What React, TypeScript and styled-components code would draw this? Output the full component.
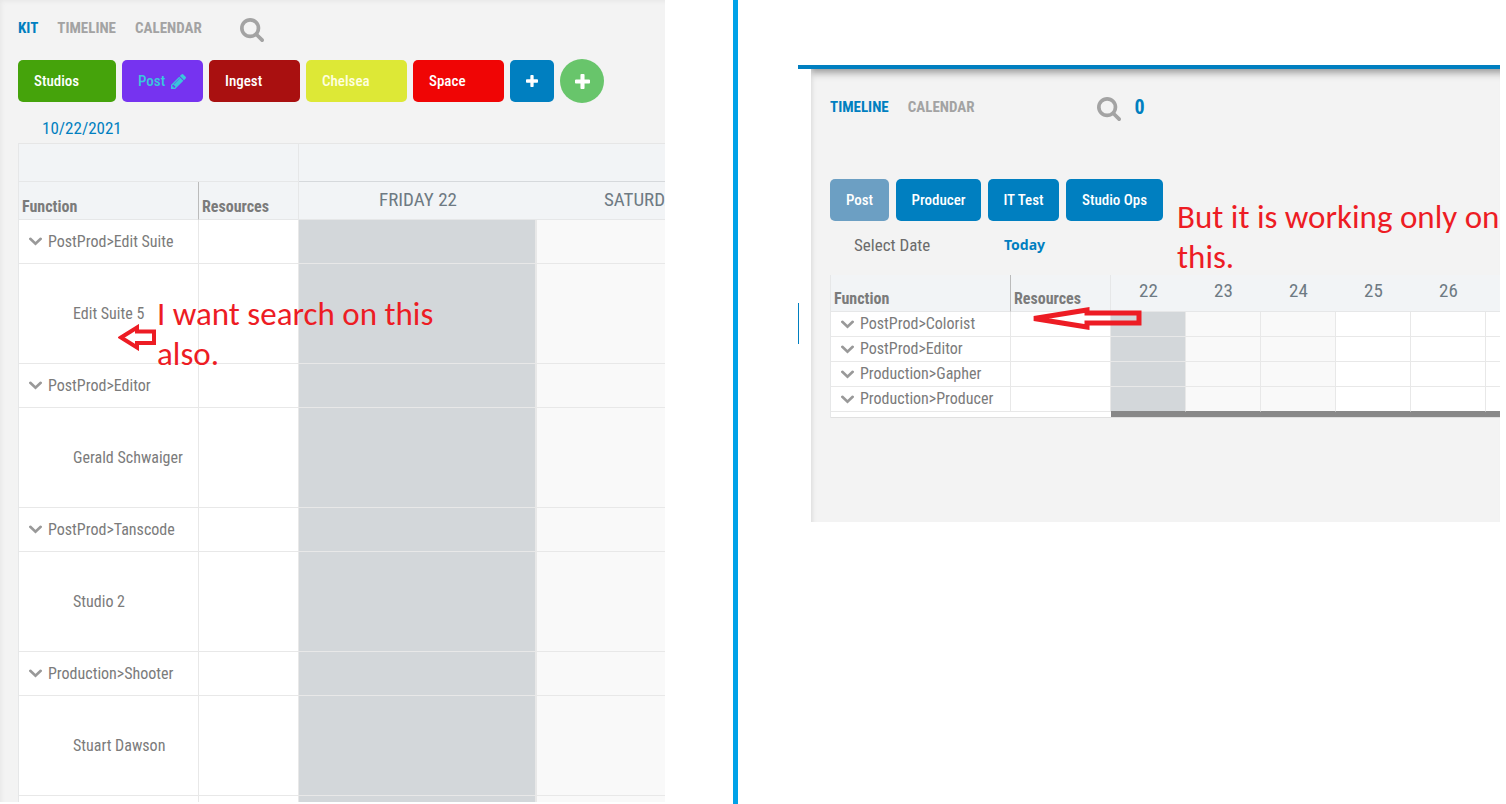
import React from 'react';
import styled, { createGlobalStyle } from 'styled-components';

const condensed = '"Roboto Condensed", "Liberation Sans Narrow", "Roboto", sans-serif';
const hand = 'Carlito, Lato, sans-serif';

const GlobalStyle = createGlobalStyle`
  *, *::before, *::after { box-sizing: border-box; }
  body { margin: 0; background: #fff; font-family: ${condensed}; color: #7b7b7b; }
  button { font-family: inherit; border: 0; padding: 0; cursor: pointer; }
`;

const Page = styled.main`
  display: grid;
  grid-template-columns: 665fr 68px 5px 60px 702fr;
  min-height: 100vh;
  padding-right: 6px;
  overflow: hidden;
`;

const KitPanel = styled.section`
  position: relative;
  min-width: 0;
  overflow: hidden;
  margin-bottom: 2px;
  padding: 16px 0 0 18px;
  background: #f3f3f3;
  box-shadow: inset 6px 6px 5px -5px #e6e6e6;
`;

const Divider = styled.div`
  grid-column: 3;
  background: #00a2e8;
`;

const RightSide = styled.div`
  grid-column: 5;
  min-width: 0;
  padding-top: 65px;
`;

const TopBar = styled.div`
  height: 4px;
  background: #007fc0;
`;

const RightBody = styled.div`
  display: flex;
  align-items: flex-start;
`;

const Marker = styled.div`
  flex: none;
  width: 13px;
  height: 41px;
  margin-top: 234px;
  border-left: 1px solid #007fc0;
`;

const TimelinePanel = styled.section`
  position: relative;
  flex: 1;
  min-width: 0;
  overflow: hidden;
  padding: 26px 0 104px 19px;
  background: #f3f3f3;
  box-shadow: inset 6px 0 5px -5px #d8d8d8, inset 0 12px 8px -9px #8c8c8c;
`;

const Nav = styled.nav<{ $gapBelow: number }>`
  display: flex;
  align-items: center;
  height: 24px;
  margin-bottom: ${(p) => p.$gapBelow}px;
`;

const NavLink = styled.a<{ $active?: boolean }>`
  margin-right: 19px;
  font-size: 15px;
  line-height: 20px;
  font-weight: 700;
  text-decoration: none;
  color: ${(p) => (p.$active ? '#007fc0' : '#a3a3a3')};
`;

const SearchButton = styled.button<{ $before: number }>`
  display: flex;
  margin-left: ${(p) => p.$before}px;
  margin-top: 4px;
  background: none;
  color: #a3a3a3;
`;

const Count = styled.span`
  margin-left: 14px;
  font-size: 20px;
  line-height: 24px;
  font-weight: 700;
  color: #007fc0;
`;

const ButtonRow = styled.div<{ $gap: number }>`
  display: flex;
  align-items: center;
  gap: ${(p) => p.$gap}px;
  height: 44px;
`;

const TagButton = styled.button<{ $bg: string; $fg?: string; $width: number; $center?: boolean }>`
  display: flex;
  align-items: center;
  justify-content: ${(p) => (p.$center ? 'center' : 'flex-start')};
  gap: 6px;
  width: ${(p) => p.$width}px;
  height: 42px;
  padding-left: ${(p) => (p.$center ? 0 : 16)}px;
  border-radius: 5px;
  background: ${(p) => p.$bg};
  color: ${(p) => p.$fg ?? '#fff'};
  font-size: 15px;
  font-weight: 500;
  white-space: nowrap;
`;

const RoundButton = styled.button`
  display: flex;
  align-items: center;
  justify-content: center;
  width: 44px;
  height: 44px;
  border-radius: 50%;
  background: #68c56b;
  color: #fff;
`;

const DateRow = styled.div<{ $above: number; $below: number }>`
  display: flex;
  align-items: center;
  padding: ${(p) => p.$above}px 0 ${(p) => p.$below}px 24px;
`;

const DateButton = styled.button<{ $blue?: boolean }>`
  width: 150px;
  background: none;
  font-size: 17px;
  line-height: 20px;
  text-align: left;
  color: ${(p) => (p.$blue ? '#007fc0' : '#6b6b6b')};
`;

const TodayButton = styled.button`
  background: none;
  font-family: "Noto Sans", sans-serif;
  font-size: 14px;
  line-height: 20px;
  font-weight: 700;
  color: #007fc0;
`;

const Table = styled.table<{ $width: number }>`
  table-layout: fixed;
  width: ${(p) => p.$width}px;
  border-collapse: separate;
  border-spacing: 0;
  border-left: 1px solid #e6e7e8;

  th, td { padding: 0; font-weight: 400; text-align: left; }
`;

const TopCell = styled.th<{ $line: string }>`
  height: 39px;
  background: #f2f4f6;
  border-top: 1px solid #e6e6e6;
  border-right: 1px solid #e6e7e8;
  border-bottom: 1px solid ${(p) => p.$line};
`;

const HeadCell = styled.th<{ $divider?: string; $height: number }>`
  && { padding: 12px 0 0 3px; font-weight: 700; }
  height: ${(p) => p.$height}px;
  background: #f2f4f6;
  border-right: 1px solid ${(p) => p.$divider ?? '#e6e7e8'};
  border-bottom: 1px solid #e6e7e8;
  font-size: 16px;
  line-height: 20px;
`;

const DayHead = styled.th<{ $below: number }>`
  && { padding-bottom: ${(p) => p.$below}px; text-align: center; }
  background: #f2f4f6;
  border-bottom: 1px solid #e6e7e8;
  font-size: 19px;
  line-height: 24px;
  color: #6e7a83;
`;

const Cell = styled.td<{ $height: number; $bg?: string; $rule?: number; $foot?: string }>`
  height: ${(p) => p.$height}px;
  background: ${(p) => p.$bg ?? '#fff'};
  border-right: ${(p) => p.$rule ?? 1}px solid #e8e8e8;
  border-bottom: 1px solid ${(p) => p.$foot ?? '#e8e8e8'};

  tr[data-cut] & { border-bottom: 0; }
`;

const Label = styled.span<{ $indent?: boolean }>`
  display: flex;
  align-items: center;
  gap: 6px;
  padding-left: ${(p) => (p.$indent ? 54 : 10)}px;
  font-size: 16px;
  line-height: 20px;
  white-space: nowrap;
`;

const Toggle = styled.button`
  display: flex;
  background: none;
  color: #999;
`;

const FootCell = styled.td<{ $bg: string }>`
  height: 6px;
  background: ${(p) => p.$bg};
  border-bottom: 1px solid #e0e0e0;
`;

const Note = styled.p<{ $left: number; $top: number; $width: number }>`
  position: absolute;
  left: ${(p) => p.$left}px;
  top: ${(p) => p.$top}px;
  width: ${(p) => p.$width}px;
  margin: 0;
  font-family: ${hand};
  font-size: 33px;
  line-height: 40px;
  color: #ed1c24;
`;

const Arrow = styled.svg<{ $left: number; $top: number }>`
  position: absolute;
  left: ${(p) => p.$left}px;
  top: ${(p) => p.$top}px;
`;

const SearchIcon = () => (
  <svg width="24" height="24" viewBox="0 128 1664 1664" fill="currentColor" aria-hidden="true">
    <path d="M1152 832q0-185-131.500-316.500t-316.500-131.500-316.500 131.500-131.500 316.500 131.500 316.500 316.500 131.500 316.500-131.500 131.500-316.500zm512 832q0 52-38 90t-90 38q-54 0-90-38l-343-342q-179 124-399 124-143 0-273.500-55.500t-225-150-150-225-55.500-273.500 55.500-273.500 150-225 225-150 273.500-55.500 273.500 55.500 225 150 150 225 55.500 273.500q0 220-124 399l343 343q37 37 37 90z" />
  </svg>
);

const PlusIcon = ({ size }: { size: number }) => (
  <svg width={size} height={size} viewBox="192 128 1408 1408" fill="currentColor" aria-hidden="true">
    <path d="M1600 736v192q0 40-28 68t-68 28h-416v416q0 40-28 68t-68 28h-192q-40 0-68-28t-28-68v-416h-416q-40 0-68-28t-28-68v-192q0-40 28-68t68-28h416v-416q0-40 28-68t68-28h192q40 0 68 28t28 68v416h416q40 0 68 28t28 68z" />
  </svg>
);

const PencilIcon = () => (
  <svg width="15" height="15" viewBox="128 149 1515 1515" fill="currentColor" aria-hidden="true">
    <path d="M491 1536l91-91-235-235-91 91v107h128v128h107zm523-928q0-22-22-22-10 0-17 7l-542 542q-7 7-7 17 0 22 22 22 10 0 17-7l542-542q7-7 7-17zm-54-192l416 416-832 832h-416v-416zm683 96q0 53-37 90l-166 166-416-416 166-165q36-38 90-38 53 0 91 38l235 234q37 39 37 91z" />
  </svg>
);

const Chevron = () => (
  <svg width="13" height="9" viewBox="0 0 13 9" fill="none" stroke="currentColor" strokeWidth="2.600" aria-hidden="true">
    <path d="M1.300 1.800L6.500 6.800L11.700 1.800" strokeLinecap="round" />
  </svg>
);

const kitRows = [
  { group: 'PostProd>Edit Suite', member: 'Edit Suite 5' },
  { group: 'PostProd>Editor', member: 'Gerald Schwaiger' },
  { group: 'PostProd>Tanscode', member: 'Studio 2' },
  { group: 'Production>Shooter', member: 'Stuart Dawson' },
];

const teamRows = ['PostProd>Colorist', 'PostProd>Editor', 'Production>Gapher', 'Production>Producer'];

const days = [
  { label: '22', bg: '#d3d7da' },
  { label: '23', bg: '#f9f9f9' },
  { label: '24', bg: '#f9f9f9' },
  { label: '25', bg: '#fff' },
  { label: '26', bg: '#fff' },
  { label: '', bg: '#fff' },
];

const GroupLabel = ({ text }: { text: string }) => (
  <Label>
    <Toggle aria-label={`Collapse ${text}`}>
      <Chevron />
    </Toggle>
    {text}
  </Label>
);

const KitRow = ({ height, cut, children }: { height: number; cut?: boolean; children?: React.ReactNode }) => (
  <tr data-cut={cut}>
    <Cell $height={height}>{children}</Cell>
    <Cell $height={height} />
    <Cell $height={height} $bg="#d3d7da" $rule={2} />
    <Cell $height={height} $bg="#f9f9f9" />
  </tr>
);

export default function App() {
  return (
    <>
      <GlobalStyle />
      <Page>
        <KitPanel>
          <Nav $gapBelow={19}>
            <NavLink href="#kit" $active>KIT</NavLink>
            <NavLink href="#timeline">TIMELINE</NavLink>
            <NavLink href="#calendar">CALENDAR</NavLink>
            <SearchButton $before={19} aria-label="Search"><SearchIcon /></SearchButton>
          </Nav>
          <ButtonRow $gap={6}>
            <TagButton $bg="#45a30b" $width={98}>Studios</TagButton>
            <TagButton $bg="#7633f0" $fg="#3ac6dc" $width={81}>Post <PencilIcon /></TagButton>
            <TagButton $bg="#a91010" $width={91}>Ingest</TagButton>
            <TagButton $bg="#dde836" $fg="#ffffe0" $width={101}>Chelsea</TagButton>
            <TagButton $bg="#f00505" $width={91}>Space</TagButton>
            <TagButton $bg="#007fc0" $width={44} $center aria-label="Add tag"><PlusIcon size={12} /></TagButton>
            <RoundButton aria-label="Add"><PlusIcon size={15} /></RoundButton>
          </ButtonRow>
          <DateRow $above={15} $below={5}>
            <DateButton $blue>10/22/2021</DateButton>
          </DateRow>
          <Table $width={757}>
            <colgroup>
              <col style={{ width: 180 }} />
              <col style={{ width: 100 }} />
              <col style={{ width: 238 }} />
              <col style={{ width: 238 }} />
            </colgroup>
            <thead>
              <tr>
                <TopCell colSpan={2} $line="#e6e7e8" />
                <TopCell colSpan={2} $line="#d6d9dc" />
              </tr>
              <tr>
                <HeadCell $divider="#bbb" $height={38}>Function</HeadCell>
                <HeadCell $height={38}>Resources</HeadCell>
                <DayHead $below={2}>FRIDAY 22</DayHead>
                <DayHead $below={2}>SATURDAY 23</DayHead>
              </tr>
            </thead>
            <tbody>
              {kitRows.map((row) => (
                <React.Fragment key={row.group}>
                  <KitRow height={44}><GroupLabel text={row.group} /></KitRow>
                  <KitRow height={100}><Label $indent>{row.member}</Label></KitRow>
                </React.Fragment>
              ))}
              <KitRow height={6} cut />
            </tbody>
          </Table>
          <Arrow $left={118} $top={324} width="39" height="27" viewBox="0 0 39 27" aria-hidden="true">
            <path d="M3 13.500L19 3.500V7.500H36V19H19V23.500Z" fill="#fff" stroke="#ed1c24" strokeWidth="4" />
          </Arrow>
          <Note $left={157} $top={294} $width={300}>I want search on this also.</Note>
        </KitPanel>
        <Divider />
        <RightSide>
          <TopBar />
          <RightBody>
            <Marker />
            <TimelinePanel>
              <Nav $gapBelow={59}>
                <NavLink href="#timeline" $active>TIMELINE</NavLink>
                <NavLink href="#calendar">CALENDAR</NavLink>
                <SearchButton $before={103} aria-label="Search"><SearchIcon /></SearchButton>
                <Count>0</Count>
              </Nav>
              <ButtonRow $gap={7}>
                <TagButton $bg="#6c9fc3" $width={59} $center>Post</TagButton>
                <TagButton $bg="#007fc0" $width={85} $center>Producer</TagButton>
                <TagButton $bg="#007fc0" $width={71} $center>IT Test</TagButton>
                <TagButton $bg="#007fc0" $width={97} $center>Studio Ops</TagButton>
              </ButtonRow>
              <DateRow $above={13} $below={20}>
                <DateButton>Select Date</DateButton>
                <TodayButton>Today</TodayButton>
              </DateRow>
              <Table $width={731}>
                <colgroup>
                  <col style={{ width: 180 }} />
                  <col style={{ width: 100 }} />
                  {days.map((day, i) => <col key={i} style={{ width: 75 }} />)}
                </colgroup>
                <thead>
                  <tr>
                    <HeadCell $divider="#bbb" $height={37}>Function</HeadCell>
                    <HeadCell $height={37}>Resources</HeadCell>
                    {days.map((day, i) => <DayHead key={i} $below={4}>{day.label}</DayHead>)}
                  </tr>
                </thead>
                <tbody>
                  {teamRows.map((name, row) => (
                    <tr key={name}>
                      <Cell $height={25}><GroupLabel text={name} /></Cell>
                      <Cell $height={25} />
                      {days.map((day, i) => (
                        <Cell key={i} $height={25} $bg={day.bg} $foot={row === 3 ? '#888' : undefined} />
                      ))}
                    </tr>
                  ))}
                  <tr>
                    <FootCell colSpan={2} $bg="#fff" />
                    <FootCell colSpan={6} $bg="#888" />
                  </tr>
                </tbody>
              </Table>
              <Arrow $left={221} $top={238} width="110" height="24" viewBox="0 0 110 24" aria-hidden="true">
                <path d="M2 11.500L55 3V6H107V16H55V20Z" fill="none" stroke="#ed1c24" strokeWidth="5" />
              </Arrow>
              <Note $left={366} $top={128} $width={330}>But it is working only on this.</Note>
            </TimelinePanel>
          </RightBody>
        </RightSide>
      </Page>
    </>
  );
}
